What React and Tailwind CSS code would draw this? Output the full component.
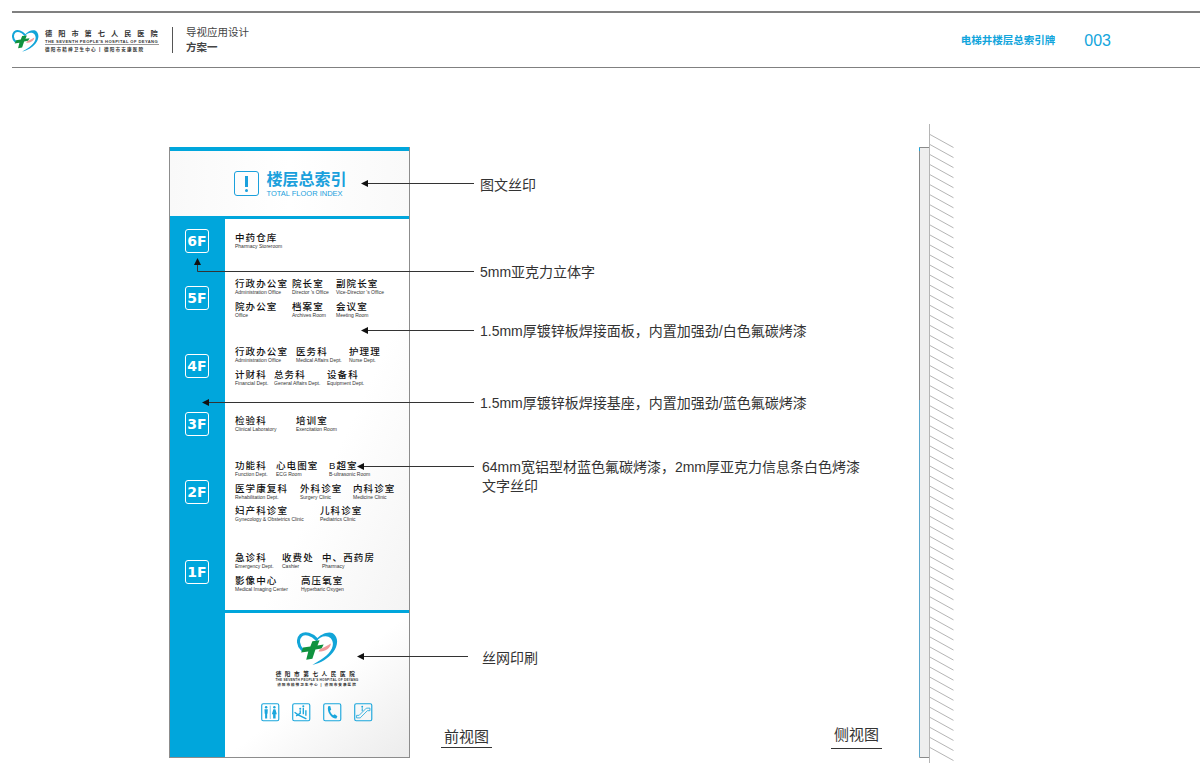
import React from "react";

const floors = [
  { label: "6F", mt: "mt-[10px]" },
  { label: "5F", mt: "mt-[33px]" },
  { label: "4F", mt: "mt-[44px]" },
  { label: "3F", mt: "mt-[34px]" },
  { label: "2F", mt: "mt-[44px]" },
  { label: "1F", mt: "mt-[56px]" },
];

// column widths come from the drawing, every room has its own x
const groups = [
  {
    mt: "mt-[13px]",
    rows: [[["中药仓库", "Pharmacy Storeroom", "w-[100px]"]]],
  },
  {
    mt: "mt-[29px]",
    rows: [
      [
        ["行政办公室", "Administration Office", "w-[57px]"],
        ["院长室", "Director 's Office", "w-[44px]"],
        ["副院长室", "Vice-Director 's Office", "w-[60px]"],
      ],
      [
        ["院办公室", "Office", "w-[57px]"],
        ["档案室", "Archives Room", "w-[44px]"],
        ["会议室", "Meeting Room", "w-[60px]"],
      ],
    ],
  },
  {
    mt: "mt-[28.5px]",
    rows: [
      [
        ["行政办公室", "Administration Office", "w-[61px]"],
        ["医务科", "Medical Affairs Dept.", "w-[53px]"],
        ["护理理", "Nurse Dept.", "w-[40px]"],
      ],
      [
        ["计财科", "Financial Dept.", "w-[39px]"],
        ["总务科", "General Affairs Dept.", "w-[53px]"],
        ["设备科", "Equipment Dept.", "w-[40px]"],
      ],
    ],
  },
  {
    mt: "mt-[29.5px]",
    rows: [
      [
        ["检验科", "Clinical Laboratory", "w-[61px]"],
        ["培训室", "Exercitation Room", "w-[60px]"],
      ],
    ],
  },
  {
    mt: "mt-[28px]",
    rows: [
      [
        ["功能科", "Function Dept.", "w-[41px]"],
        ["心电图室", "ECG Room", "w-[53px]"],
        ["B超室", "B-ultrasonic Room", "w-[50px]"],
      ],
      [
        ["医学康复科", "Rehabilitation Dept.", "w-[65px]"],
        ["外科诊室", "Surgery Clinic", "w-[53px]"],
        ["内科诊室", "Medicine Clinic", "w-[50px]"],
      ],
      [
        ["妇产科诊室", "Gynecology & Obstetrics Clinic", "w-[85px]"],
        ["儿科诊室", "Pediatrics Clinic", "w-[60px]"],
      ],
    ],
  },
  {
    mt: "mt-[30px]",
    rows: [
      [
        ["急诊科", "Emergency Dept.", "w-[47px]"],
        ["收费处", "Cashier", "w-[40px]"],
        ["中、西药房", "Pharmacy", "w-[62px]"],
      ],
      [
        ["影像中心", "Medical Imaging Center", "w-[66px]"],
        ["高压氧室", "Hyperbaric Oxygen", "w-[60px]"],
      ],
    ],
  },
];

const notes = [
  { text: "图文丝印", cls: "left-[480px] top-[175px]" },
  { text: "5mm亚克力立体字", cls: "left-[480px] top-[262px]" },
  { text: "1.5mm厚镀锌板焊接面板，内置加强劲/白色氟碳烤漆", cls: "left-[480px] top-[321px]" },
  { text: "1.5mm厚镀锌板焊接基座，内置加强劲/蓝色氟碳烤漆", cls: "left-[480px] top-[393px]" },
  { text: "64mm宽铝型材蓝色氟碳烤漆，2mm厚亚克力信息条白色烤漆", cls: "left-[482px] top-[457px]" },
  { text: "文字丝印", cls: "left-[482px] top-[476px]" },
  { text: "丝网印刷", cls: "left-[482px] top-[648px]" },
];

const HeartLogo = ({ className }) => (
  <svg viewBox="0 0 40 33" className={className}>
    <path
      d="M19 8C15 3 8 1 4 4C0 8 1 14 5 18"
      fill="none"
      stroke="#12a5d8"
      strokeWidth="3"
      strokeLinecap="round"
    />
    <path
      d="M19 8C23 3 30 0 35 2C41 6 40 15 35 21C30 27 24 31 15 33C22 29 31 24 34 17C37 10 33 5 28 5C24 5 21 7 19 10Z"
      fill="#12a5d8"
    />
    <path
      d="M15 10L22 9L20 14L26 13L24 17L18 18L15 27L9 28L11 20L4 21L6 16L13 15Z"
      fill="#10923f"
    />
    <path d="M22 18C26 16 30 14 33 12C33 16 28 20 21 20Z" fill="#ef9a9a" />
  </svg>
);

const ServiceIcons = () => (
  <div className="flex gap-[12.5px] mt-[15px] text-[#1aa6dc]">
    <svg viewBox="0 0 18 18" className="w-[18.5px] h-[18.5px]">
      <rect x="0.7" y="0.7" width="16.6" height="16.6" rx="1.5" fill="none" stroke="currentColor" strokeWidth="1.1" />
      <line x1="9" y1="2.5" x2="9" y2="15.5" stroke="currentColor" strokeWidth="0.6" />
      <circle cx="5" cy="4.2" r="1.2" fill="currentColor" />
      <path d="M3.4 6H6.6L6.4 10.5H6V15H4V10.5H3.6Z" fill="currentColor" />
      <circle cx="13" cy="4.2" r="1.2" fill="currentColor" />
      <path d="M12 6H14L15.4 11H14.2V15H11.8V11H10.6Z" fill="currentColor" />
    </svg>
    <svg viewBox="0 0 18 18" className="w-[18.5px] h-[18.5px]">
      <rect x="0.7" y="0.7" width="16.6" height="16.6" rx="1.5" fill="none" stroke="currentColor" strokeWidth="1.1" />
      <path d="M2.5 9L6 11.5L14 15.5" fill="none" stroke="currentColor" strokeWidth="1.3" />
      <path d="M4 12.5L8 10V7M11 11V4.5M13.5 12.5V7" fill="none" stroke="currentColor" strokeWidth="1.3" />
      <circle cx="8" cy="5.5" r="1" fill="currentColor" />
      <circle cx="11" cy="3.2" r="1" fill="currentColor" />
    </svg>
    <svg viewBox="0 0 18 18" className="w-[18.5px] h-[18.5px]">
      <rect x="0.7" y="0.7" width="16.6" height="16.6" rx="1.5" fill="none" stroke="currentColor" strokeWidth="1.1" />
      <path
        d="M5 3.2L7 3L8 6.5L6.8 7.6C7.2 9.4 8.4 11 10 12L11.4 11L14 13L13 15C9 15.6 3.4 9.4 5 3.2Z"
        fill="currentColor"
      />
    </svg>
    <svg viewBox="0 0 18 18" className="w-[18.5px] h-[18.5px]">
      <rect x="0.7" y="0.7" width="16.6" height="16.6" rx="1.5" fill="none" stroke="currentColor" strokeWidth="1.1" />
      <path d="M2.5 14.5L6 14.5L13 7.5H15.5V5H12L5 12H2.5Z" fill="none" stroke="currentColor" strokeWidth="0.8" />
      <path d="M8 8V5" stroke="currentColor" strokeWidth="1" />
      <circle cx="8" cy="3.6" r="0.9" fill="currentColor" />
    </svg>
  </div>
);

const Sign = () => (
  <div className="ml-[169px] mt-[79px] w-[241px] h-[611px] flex flex-col border-x border-b border-[#8c8c8c]">
    <div className="h-[4px] bg-[#00a6dc]" />
    <div className="h-[65px] flex items-center justify-center gap-[7px] pl-[2px] bg-linear-to-r from-[#f9f9f9] via-white to-[#f9f9f9]">
      <div className="w-[25px] h-[25px] border-[1.5px] border-[#1aa0dc] rounded-[3px] flex flex-col items-center justify-center gap-[2px]">
        <span className="w-[3px] h-[11px] bg-[#1aa0dc]" />
        <span className="w-[3px] h-[3px] rounded-full bg-[#1aa0dc]" />
      </div>
      <div className="flex flex-col text-[#1aa0dc]">
        <span className="text-[16px] leading-[19px] font-bold">楼层总索引</span>
        <span className="text-[7.5px] leading-[9px] font-['Liberation_Sans',sans-serif] whitespace-nowrap">TOTAL FLOOR INDEX</span>
      </div>
    </div>
    <div className="h-[3px] bg-[#00a6dc]" />
    <div className="flex-1 flex">
      <div className="w-[55px] bg-[#00a6dc] flex flex-col items-center pr-[1px]">
        {floors.map((f) => (
          <div
            key={f.label}
            className={`${f.mt} w-[24px] h-[24px] border-[1.5px] border-white rounded-[3px] flex items-center justify-center text-white text-[14px] font-bold font-['DejaVu_Sans',sans-serif]`}
          >
            {f.label}
          </div>
        ))}
      </div>
      <div className="flex-1 flex flex-col">
        <div className="h-[391px] pl-[10px] bg-linear-to-br from-white via-white via-60% to-[#f4f4f4]">
          {groups.map((g, i) => (
            <div key={i} className={`${g.mt} flex flex-col gap-[5.5px]`}>
              {g.rows.map((row, j) => (
                <div key={j} className="flex h-[17px]">
                  {row.map(([zh, en, w]) => (
                    <div key={zh} className={`${w} shrink-0 whitespace-nowrap`}>
                      <div className="text-[9.5px] leading-[12px] tracking-[1.1px] font-medium text-[#111]">{zh}</div>
                      <div className="text-[5px] leading-[5px] text-[#333] font-['Liberation_Sans',sans-serif]">{en}</div>
                    </div>
                  ))}
                </div>
              ))}
            </div>
          ))}
        </div>
        <div className="h-[3px] bg-[#00a6dc]" />
        <div className="flex-1 flex flex-col items-center pt-[18px] bg-linear-to-br from-white via-white via-50% to-[#ececec]">
          <HeartLogo className="w-[41px] h-[34px]" />
          <div className="mt-[5px] text-[5.6px] leading-[8px] font-bold tracking-[3.6px] text-[#222] whitespace-nowrap">德阳市第七人民医院</div>
          <div className="text-[3.2px] leading-[4px] tracking-[0.2px] text-[#333] font-bold whitespace-nowrap font-['Liberation_Sans',sans-serif]">THE SEVENTH PEOPLE'S HOSPITAL OF DEYANG</div>
          <div className="text-[3.6px] leading-[6px] font-bold tracking-[1px] text-[#333] whitespace-nowrap">德阳市精神卫生中心 | 德阳市安康医院</div>
          <ServiceIcons />
        </div>
      </div>
    </div>
  </div>
);

// leader lines and the side view, drawn over the page
const Leaders = () => (
  <svg viewBox="0 0 1200 775" className="absolute inset-0 w-[1200px] h-[775px] pointer-events-none">
    <g stroke="#333" strokeWidth="1" fill="none">
      <path d="M474 183.500H366" />
      <path d="M474 271.500H197.500V264" />
      <path d="M474 330.500H366" />
      <path d="M474 402.500H207" />
      <path d="M474 466.500H362" />
      <path d="M468 656.500H362" />
    </g>
    <g fill="#111">
      <path d="M361 183.500L368 180V187Z" />
      <path d="M197.500 258L194 265H201Z" />
      <path d="M361 330.500L368 327V334Z" />
      <path d="M202 402.500L209 399V406Z" />
      <path d="M357 466.500L364 463V470Z" />
      <path d="M357 656.500L364 653V660Z" />
    </g>
    <rect x="920" y="148" width="9" height="609" fill="#eeeeee" />
    <path d="M929.500 147.500H919.500V757.500H929.500" fill="none" stroke="#8a8a8a" />
    <path d="M919.500 400V757" fill="none" stroke="#5ba7cc" />
    <path d="M919.500 147.500V151" fill="none" stroke="#1aa6dc" />
    <path d="M929.500 124V763" stroke="#b5b5b5" fill="none" />
    <g stroke="#b5b5b5" fill="none">
      {Array.from({ length: 62 }, (_, i) => (
        <path key={i} d={`M930 ${134.5 + i * 10.05}L953.500 ${147.5 + i * 10.05}`} />
      ))}
    </g>
  </svg>
);

const App = () => {
  return (
    <div className="relative w-[1200px] h-[775px] overflow-hidden bg-white font-['Liberation_Sans','Noto_Sans_CJK_SC',sans-serif]">
      <header className="pt-[11px] pl-[12px]">
        <div className="h-[2px] bg-[#808080]" />
        <div className="h-[54px] flex items-center">
          <HeartLogo className="w-[27px] h-[23px] mt-[1px]" />
          <div className="ml-[6px] w-[114px] flex flex-col mt-[2px] text-[#333]">
            <span className="text-[7.2px] leading-[10px] font-bold tracking-[6px] whitespace-nowrap">德阳市第七人民医院</span>
            <span className="text-[4.1px] leading-[5px] font-bold tracking-[0.42px] whitespace-nowrap border-b border-[#999]">THE SEVENTH PEOPLE'S HOSPITAL OF DEYANG</span>
            <span className="text-[4.6px] leading-[9px] font-bold tracking-[1.15px] whitespace-nowrap">德阳市精神卫生中心 | 德阳市安康医院</span>
          </div>
          <div className="ml-[13px] w-px h-[26px] bg-[#555]" />
          <div className="ml-[13px] flex flex-col text-[#444] text-[10.5px] leading-[15px]">
            <span>导视应用设计</span>
            <span className="font-bold">方案一</span>
          </div>
          <span className="ml-auto mt-[1px] text-[10.5px] text-[#12a5dc] font-bold">电梯井楼层总索引牌</span>
          <span className="ml-[29px] mr-[89px] mt-[1px] text-[16px] text-[#12a5dc]">003</span>
        </div>
        <div className="h-px bg-[#808080]" />
      </header>

      <Sign />
      <Leaders />

      {notes.map((n) => (
        <div key={n.text} className={`absolute ${n.cls} text-[14px] leading-[20px] text-[#333] whitespace-nowrap`}>
          {n.text}
        </div>
      ))}

      <div className="absolute left-[441px] top-[727px] w-[51px] border-b border-[#333] pb-[1px] text-center text-[15px] leading-[19px] text-[#333]">前视图</div>
      <div className="absolute left-[831px] top-[725px] w-[51px] border-b border-[#333] pb-[3px] text-center text-[15px] leading-[20px] text-[#333]">侧视图</div>
    </div>
  );
};

export default App;
